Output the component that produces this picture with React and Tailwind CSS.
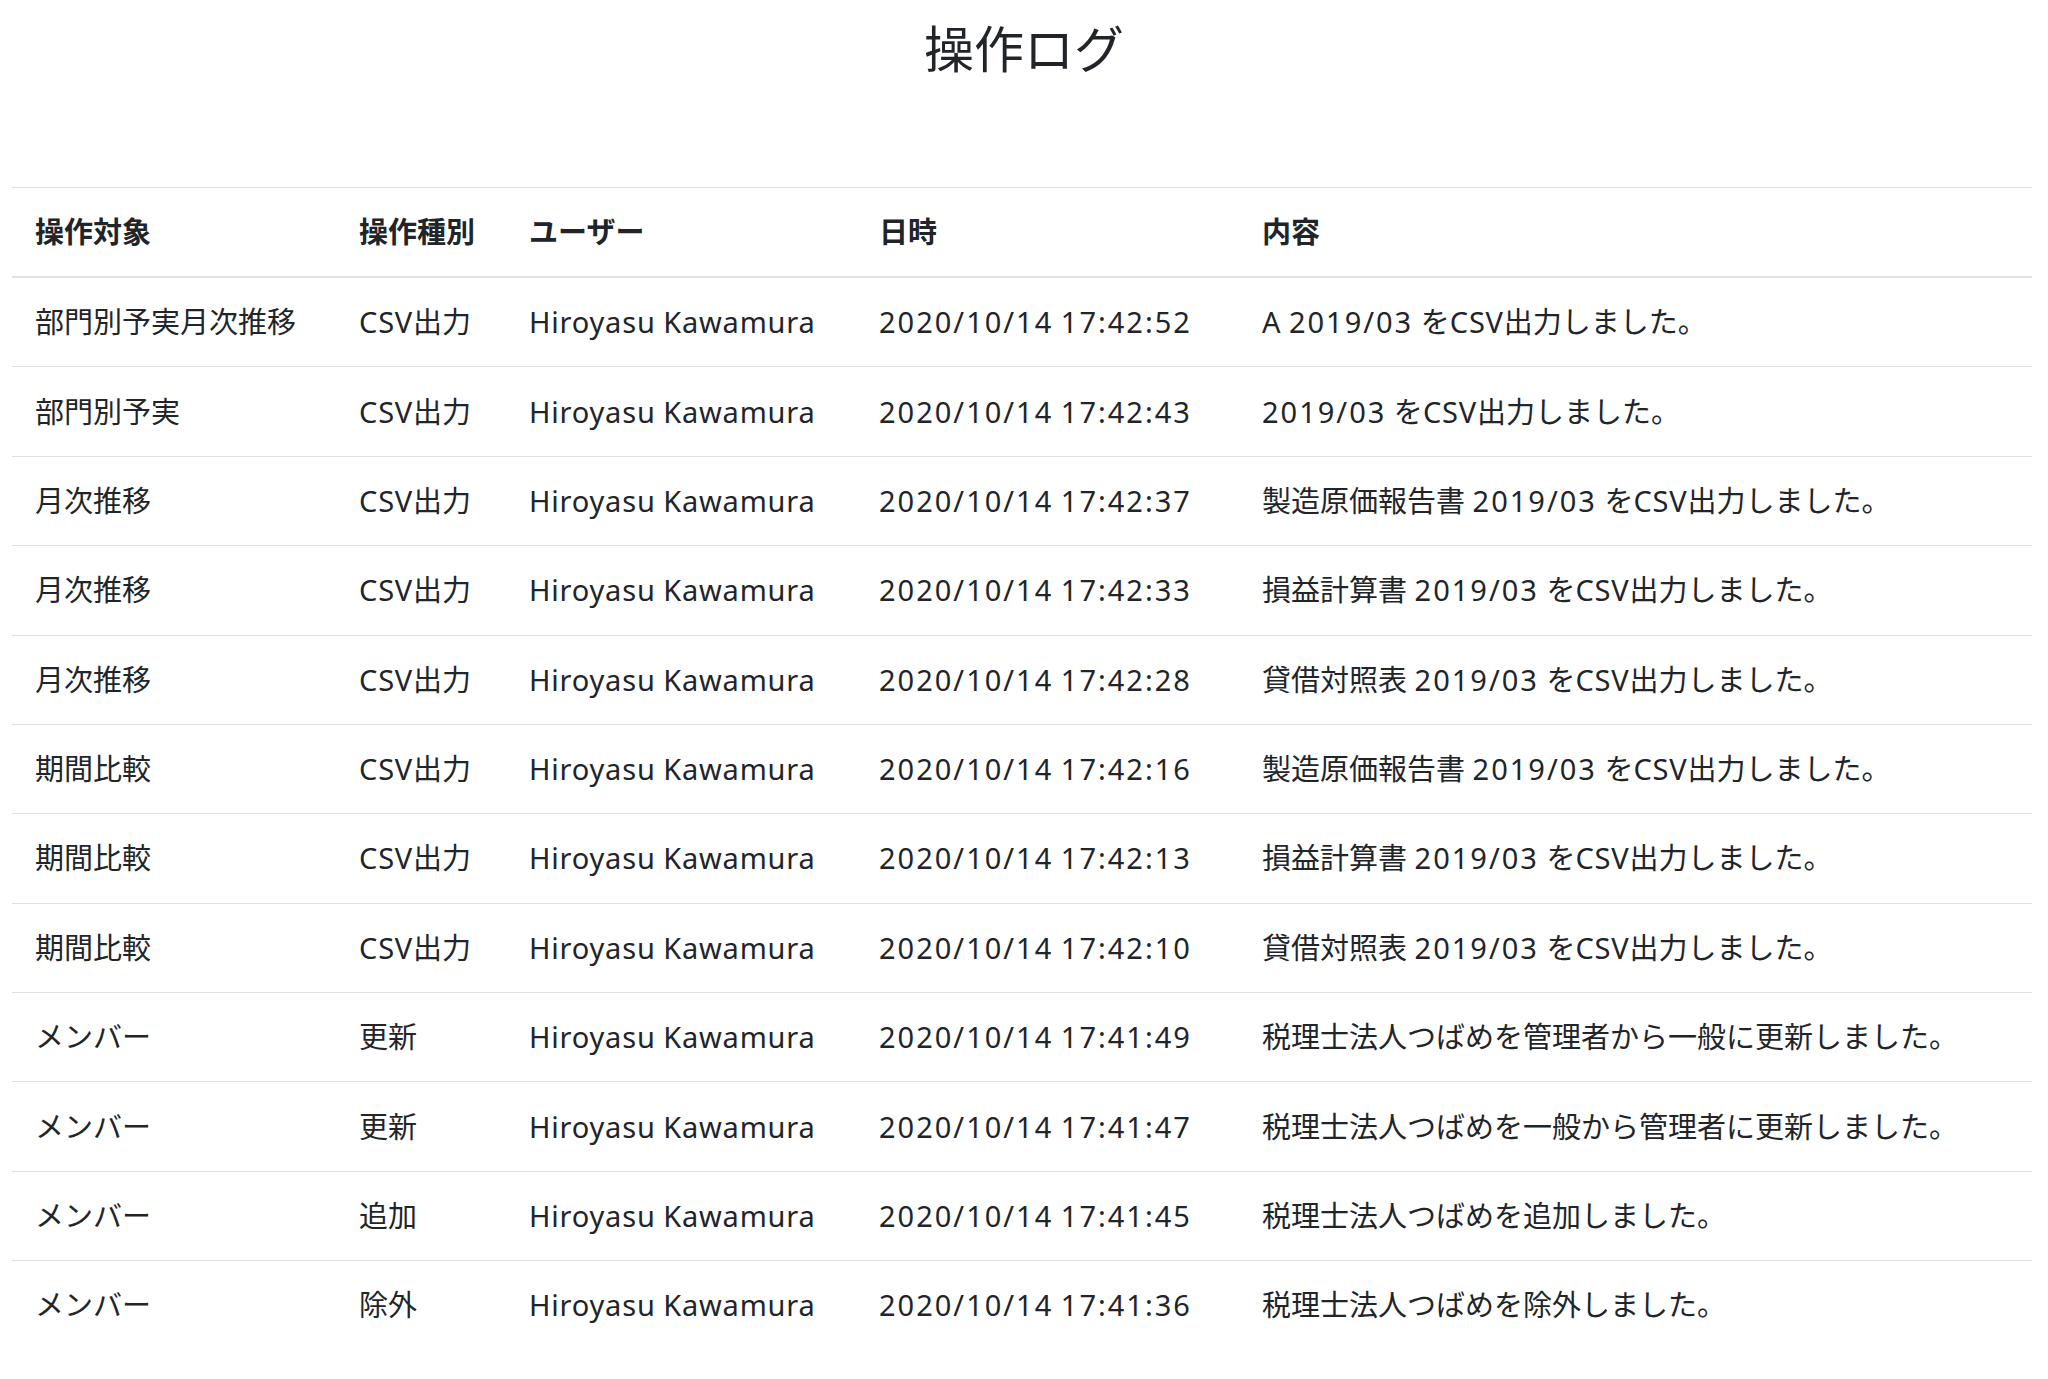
import React from 'react'

const logs = [
    { target: '部門別予実月次推移', type: 'CSV出力', user: 'Hiroyasu Kawamura', date: '2020/10/14 17:42:52', content: 'A 2019/03 をCSV出力しました。' },
    { target: '部門別予実', type: 'CSV出力', user: 'Hiroyasu Kawamura', date: '2020/10/14 17:42:43', content: '2019/03 をCSV出力しました。' },
    { target: '月次推移', type: 'CSV出力', user: 'Hiroyasu Kawamura', date: '2020/10/14 17:42:37', content: '製造原価報告書 2019/03 をCSV出力しました。' },
    { target: '月次推移', type: 'CSV出力', user: 'Hiroyasu Kawamura', date: '2020/10/14 17:42:33', content: '損益計算書 2019/03 をCSV出力しました。' },
    { target: '月次推移', type: 'CSV出力', user: 'Hiroyasu Kawamura', date: '2020/10/14 17:42:28', content: '貸借対照表 2019/03 をCSV出力しました。' },
    { target: '期間比較', type: 'CSV出力', user: 'Hiroyasu Kawamura', date: '2020/10/14 17:42:16', content: '製造原価報告書 2019/03 をCSV出力しました。' },
    { target: '期間比較', type: 'CSV出力', user: 'Hiroyasu Kawamura', date: '2020/10/14 17:42:13', content: '損益計算書 2019/03 をCSV出力しました。' },
    { target: '期間比較', type: 'CSV出力', user: 'Hiroyasu Kawamura', date: '2020/10/14 17:42:10', content: '貸借対照表 2019/03 をCSV出力しました。' },
    { target: 'メンバー', type: '更新', user: 'Hiroyasu Kawamura', date: '2020/10/14 17:41:49', content: '税理士法人つばめを管理者から一般に更新しました。' },
    { target: 'メンバー', type: '更新', user: 'Hiroyasu Kawamura', date: '2020/10/14 17:41:47', content: '税理士法人つばめを一般から管理者に更新しました。' },
    { target: 'メンバー', type: '追加', user: 'Hiroyasu Kawamura', date: '2020/10/14 17:41:45', content: '税理士法人つばめを追加しました。' },
    { target: 'メンバー', type: '除外', user: 'Hiroyasu Kawamura', date: '2020/10/14 17:41:36', content: '税理士法人つばめを除外しました。' },
]

// 英数字だけ少し字間を広げる（元の画面のフォント幅に合わせる）
function Spaced({ text }) {
    const parts = text.split(/([0-9/:]+|[A-Za-z]+)/)
    return parts.map((part, i) => {
        if (/^[0-9/:]+$/.test(part)) return <span key={i} className="tracking-[2px]">{part}</span>
        if (/^[A-Za-z]+$/.test(part)) return <span key={i} className="tracking-[0.8px]">{part}</span>
        return <React.Fragment key={i}>{part}</React.Fragment>
    })
}

export default function App() {
    return (
        <div className="min-h-screen bg-white text-[#212529] font-['Noto_Sans','Noto_Sans_CJK_JP',sans-serif]">
            <h1 className="pt-[19px] text-center text-[50px] leading-[60px] font-normal">操作ログ</h1>

            <div className="mt-[108px] pl-[12px] pr-[16px]">
                <table className="w-full table-fixed border-collapse text-[29px] leading-[44px]">
                    <thead>
                        <tr className="border-t border-b-2 border-[#dee2e6]">
                            <th className="w-[324px] px-[23px] py-[22px] text-left font-bold">操作対象</th>
                            <th className="w-[170px] px-[23px] py-[22px] text-left font-bold">操作種別</th>
                            <th className="w-[350px] px-[23px] py-[22px] text-left font-bold">ユーザー</th>
                            <th className="w-[383px] px-[23px] py-[22px] text-left font-bold">日時</th>
                            <th className="px-[23px] py-[22px] text-left font-bold">内容</th>
                        </tr>
                    </thead>
                    <tbody>
                        {/* ログ一覧 */}
                        {logs.map((log, index) =>
                            <tr key={index} className="border-t border-[#dee2e6]">
                                <td className="px-[23px] py-[22.2px] whitespace-nowrap">{log.target}</td>
                                <td className="px-[23px] py-[22.2px] whitespace-nowrap"><Spaced text={log.type} /></td>
                                <td className="px-[23px] py-[22.2px] whitespace-nowrap"><Spaced text={log.user} /></td>
                                <td className="px-[23px] py-[22.2px] whitespace-nowrap"><Spaced text={log.date} /></td>
                                <td className="px-[23px] py-[22.2px] whitespace-nowrap"><Spaced text={log.content} /></td>
                            </tr>
                        )}
                    </tbody>
                </table>
            </div>
        </div>
    )
}
